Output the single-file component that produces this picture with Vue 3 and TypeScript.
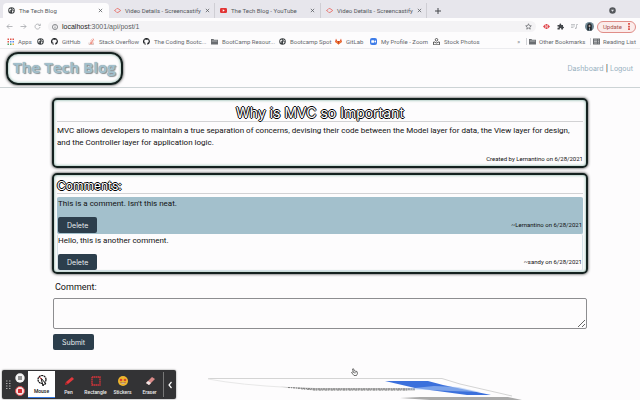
<script setup lang="ts">
import { ref } from 'vue'

interface Tab { title: string; icon: string; active?: boolean }
interface Bookmark { label: string; icon: string }
interface Comment { id: number; text: string; author: string; date: string }

const tabs: Tab[] = [
  { title: 'The Tech Blog', icon: 'globe', active: true },
  { title: 'Video Details - Screencastify', icon: 'cast' },
  { title: 'The Tech Blog - YouTube', icon: 'youtube' },
  { title: 'Video Details - Screencastify', icon: 'cast' },
]
const bookmarks: Bookmark[] = [
  { label: 'Apps', icon: 'apps' },
  { label: '', icon: 'globe' },
  { label: 'GitHub', icon: 'github' },
  { label: 'Stack Overflow', icon: 'stack' },
  { label: 'The Coding Bootc...', icon: 'github' },
  { label: 'BootCamp Resour...', icon: 'folder' },
  { label: 'Bootcamp Spot', icon: 'globe' },
  { label: 'GitLab', icon: 'gitlab' },
  { label: 'My Profile - Zoom', icon: 'zoom' },
  { label: 'Stock Photos', icon: 'stock' },
]
const comments = ref<Comment[]>([
  { id: 1, text: "This is a comment. Isn't this neat.", author: 'Lernantino', date: '6/28/2021' },
  { id: 2, text: 'Hello, this is another comment.', author: 'sandy', date: '6/28/2021' },
])
const draft = ref('')
const tools = ['Mouse', 'Pen', 'Rectangle', 'Stickers', 'Eraser']
</script>

<template>
  <svg class="sprite" aria-hidden="true">
    <symbol id="globe" viewBox="0 0 14 14">
      <circle cx="7" cy="7" r="6.5" fill="#3c4043" />
      <path d="M2 5l3-2 2 1-1 2-2 1 1 3-2-1zM8 2l4 3-1 1-2-1zM8 7l3 0 0 2-2 3-1-2z" fill="#eee" />
    </symbol>
    <symbol id="cast" viewBox="0 0 14 14">
      <path d="M5 3.500a4 4 0 0 1 5 1M10 9.500a4 4 0 0 1-5 1M4.500 4.500L1 7l3.500 2.500M10 4.500L13.500 7 10 9.500" fill="none" stroke="#e8655f" stroke-width="1.700" />
    </symbol>
    <symbol id="youtube" viewBox="0 0 14 14">
      <rect y="2" width="14" height="10" rx="2.500" fill="#e23434" /><path d="M5.500 4.500v5L9.500 7z" fill="#fff" />
    </symbol>
    <symbol id="apps" viewBox="0 0 14 14">
      <path d="M1 1h3v3H1zM6 1h3v3H6zM11 1h3v3h-3zM1 6h3v3H1z" fill="#e0564c" />
      <path d="M6 6h3v3H6zM11 6h3v3h-3z" fill="#5b8def" />
      <path d="M1 11h3v3H1zM6 11h3v3H6z" fill="#4fa66a" /><path d="M11 11h3v3h-3z" fill="#e9b440" />
    </symbol>
    <symbol id="github" viewBox="0 0 16 16">
      <path fill="#16181c" d="M8 0C3.580 0 0 3.580 0 8c0 3.540 2.290 6.530 5.470 7.590.4.070.55-.17.55-.38v-1.500c-2.230.48-2.700-1.070-2.700-1.070-.36-.92-.89-1.170-.89-1.170-.73-.5.050-.49.050-.49.8.060 1.230.83 1.230.83.71 1.220 1.870.87 2.330.66.070-.52.28-.87.5-1.070-1.770-.2-3.640-.89-3.640-3.950 0-.87.310-1.590.82-2.150-.080-.2-.36-1.020.080-2.120 0 0 .67-.21 2.200.82a7.600 7.600 0 0 1 4 0c1.530-1.040 2.200-.82 2.200-.82.44 1.100.16 1.920.080 2.120.51.560.82 1.270.82 2.150 0 3.070-1.870 3.750-3.650 3.950.29.250.54.730.54 1.480v2.200c0 .21.150.46.550.38A8 8 0 0 0 8 0z" />
    </symbol>
    <symbol id="stack" viewBox="0 0 14 14">
      <path d="M2 9v4h9V9" fill="none" stroke="#c9a9a0" stroke-width="1.300" />
      <path d="M4 11h5M4.200 8.500l5 .8M5.200 5.500l4.500 2M7 3l3.500 3.200M10 1l1.600 4" stroke="#e8604c" stroke-width="1.300" />
    </symbol>
    <symbol id="folder" viewBox="0 0 14 14">
      <path d="M0 2h5l1 1.500h8V13H0z" fill="#6a6d71" /><path d="M1.500 6h11" stroke="#fff" stroke-width="1" />
    </symbol>
    <symbol id="gitlab" viewBox="0 0 14 14">
      <path d="M7 13L0 8l2-7 2.500 5h5L12 1l2 7z" fill="#e2532d" /><path d="M7 13L4.500 6h5z" fill="#c83c22" /><path d="M7 13L1 7l3.500-1zM7 13l6-6-3.500-1z" fill="#f08a3a" />
    </symbol>
    <symbol id="zoom" viewBox="0 0 14 14">
      <rect width="14" height="14" rx="4" fill="#3f7de8" /><rect x="2.500" y="4.500" width="6" height="5" rx="1" fill="#fff" /><path d="M9 6.500l3-2v5l-3-2z" fill="#fff" />
    </symbol>
    <symbol id="stock" viewBox="0 0 14 14">
      <path d="M1 8h3l1.500 2h3L10 8h3v5.500H1z" fill="none" stroke="#222" stroke-width="1.400" /><circle cx="7" cy="3.500" r="2.500" fill="none" stroke="#222" stroke-width="1.400" />
    </symbol>
    <symbol id="list" viewBox="0 0 14 14">
      <rect x="0" y="1" width="14" height="12" fill="#6a6d71" /><path d="M2 4h6M2 7h6M2 10h6M10 4h2M10 7h2M10 10h2" stroke="#fff" />
    </symbol>
  </svg>

  <div class="window">
    <nav class="tabs" aria-label="Tabs">
      <div v-for="(tab, i) in tabs" :key="i" class="tab" :class="{ active: tab.active }">
        <svg class="ico"><use :href="'#' + tab.icon" /></svg>
        <span class="tab-title">{{ tab.title }}</span>
        <button class="plain" aria-label="Close tab">
          <svg class="cross" viewBox="0 0 6 6"><path d="M1 1l4 4M5 1L1 5" stroke="#55585c" stroke-width="0.900" /></svg>
        </button>
      </div>
      <button class="plain add" aria-label="New tab">
        <svg class="plus" viewBox="0 0 6 6"><path d="M3 0v6M0 3h6" stroke="#44474b" /></svg>
      </button>
      <svg class="ico chev" viewBox="0 0 14 14"><circle cx="7" cy="7" r="6.500" fill="#55585c" /><path d="M4 5.500h6L7 9.500z" fill="#e7e6ec" /></svg>
    </nav>

    <div class="bar">
      <button class="plain" aria-label="Back"><svg class="ico" viewBox="0 0 14 14"><path d="M13 7H2M6.500 2.500L2 7l4.500 4.500" class="line" /></svg></button>
      <button class="plain" aria-label="Forward"><svg class="ico" viewBox="0 0 14 14"><path d="M1 7h11M7.500 2.500L12 7l-4.500 4.500" class="line" /></svg></button>
      <button class="plain" aria-label="Reload"><svg class="ico" viewBox="0 0 14 14"><path d="M12 8a5 5 0 1 1-1.500-4.500L12 5M12.500 1.500V5H9" class="line" /></svg></button>
      <div class="address">
        <svg class="info" viewBox="0 0 14 14"><circle cx="7" cy="7" r="6" fill="none" stroke="#55585c" stroke-width="1.500" /><path d="M7 6v4.500M7 3.300v1.500" stroke="#55585c" stroke-width="1.500" /></svg>
        <span class="url"><b>localhost</b>:3001/api/post/1</span>
        <svg class="ico" viewBox="0 0 14 14"><path d="M7 1.500l1.600 3.700 4 .4-3 2.700.9 4L7 10.200l-3.500 2.100.9-4-3-2.700 4-.4z" fill="none" stroke="#55585c" stroke-width="1.300" /></svg>
      </div>
      <div class="exts">
        <svg class="ico" viewBox="0 0 14 14"><path d="M0 7l4-4v8zM14 7l-4-4v8zM5 2h4v10H5z" fill="#e0474c" /><path d="M7 5v4" stroke="#fff" /></svg>
        <svg class="ico" viewBox="0 0 14 14"><path d="M1 4h4V2.500a1.700 1.700 0 0 1 3.400 0V4h3.600v3.500h.5a1.500 1.500 0 0 1 0 3H12V13H8.500v-1.500a1.500 1.500 0 0 0-3 0V13H1V9.500h1.500a1.300 1.300 0 0 0 0-2.600H1z" fill="#44474b" /></svg>
        <svg class="ico" viewBox="0 0 14 14"><path d="M0 3h8M0 6h8M0 9h5M11 10V3h3" fill="none" stroke="#a9abb0" stroke-width="1.300" /><circle cx="9.500" cy="10.500" r="1.500" fill="#a9abb0" /></svg>
        <svg class="avatar" viewBox="0 0 16 16"><circle cx="8" cy="8" r="8" fill="#6f8794" /><path d="M4 15V6a4 4 0 0 1 8 0v9z" fill="#1d2227" /><path d="M6.500 5h3v4h-3z" fill="#b9a9a2" /><path d="M7 10h2v5H7z" fill="#8499a6" /></svg>
      </div>
      <button class="update">Update <svg class="dots" viewBox="0 0 2 8"><path d="M0 0h2v2H0zM0 3h2v2H0zM0 6h2v2H0z" fill="#d9483f" /></svg></button>
    </div>

    <nav class="marks" aria-label="Bookmarks">
      <a v-for="(b, i) in bookmarks" :key="i" class="mark" href="#" :aria-label="b.label || 'Saved page'"><svg class="ico"><use :href="'#' + b.icon" /></svg>{{ b.label }}</a>
      <span class="more">»</span>
      <a class="mark side" href="#"><svg class="ico"><use href="#folder" /></svg>Other Bookmarks</a>
      <a class="mark side" href="#"><svg class="ico"><use href="#list" /></svg>Reading List</a>
    </nav>

    <header class="site-head">
      <h1 class="logo">The Tech Blog</h1>
      <nav class="links"><a href="#">Dashboard</a> | <a href="#">Logout</a></nav>
    </header>

    <main class="content">
      <article class="card post">
        <h2 class="title">Why is MVC so Important</h2>
        <p class="body">MVC allows developers to maintain a true separation of concerns, devising their code between the Model layer for data, the View layer for design, and the Controller layer for application logic.</p>
        <p class="meta">Created by Lernantino on 6/28/2021</p>
      </article>

      <section class="card thread">
        <h3 class="title">Comments:</h3>
        <ul class="comments">
          <li v-for="c in comments" :key="c.id" class="comment">
            <p class="text">{{ c.text }}</p>
            <div class="foot">
              <button class="btn">Delete</button>
              <span class="meta">~{{ c.author }} on {{ c.date }}</span>
            </div>
          </li>
        </ul>
      </section>

      <form class="form" @submit.prevent>
        <label for="comment">Comment:</label>
        <textarea id="comment" v-model="draft"></textarea>
        <button class="btn" type="submit">Submit</button>
      </form>
    </main>

    <svg class="warp" viewBox="0 0 340 26" aria-hidden="true">
      <path d="M18 4.500H252L270 10 322 22" fill="none" stroke="#d4d4d4" />
      <path d="M18 5Q50 11 100 13.500" fill="none" stroke="#e8e8e8" />
      <path d="M90 12.800L125 14H225V16.500H125z" fill="#bdbdbd" />
      <path d="M98 13.500L125 15H225" fill="none" stroke="#7d7d7d" stroke-dasharray="2 1 1 1" />
      <path d="M108 14.500L125 16H218" fill="none" stroke="#8d8d8d" stroke-dasharray="1 2 2 1" />
      <path d="M195 7h43l15 4 48 10h-24l-52-7z" fill="#3b70dc" />
      <path d="M214 15l30-3 24 1 22 5-30-1z" fill="#a9c4f2" opacity="0.600" />
      <path d="M210 24l20-1h88l14 3H240z" fill="#aaa" />
    </svg>

    <svg class="pointer" viewBox="0 0 14 16" aria-hidden="true"><path d="M3 2l2-.5L7 6l5 1 1 4-2 4H6L1 9l2-1 2 1z" fill="#fff" stroke="#444" stroke-width="1.500" /><path d="M7 8v3M9.500 8v3" stroke="#444" /></svg>

    <div class="recorder" role="toolbar" aria-label="Drawing tools">
      <svg class="grip" viewBox="0 0 5 10"><path d="M0 1h1.500M3 1h1.500M0 3.500h1.500M3 3.500h1.500M0 6h1.500M3 6h1.500M0 8.500h1.500M3 8.500h1.500" stroke="#aaa" stroke-width="1.200" /></svg>
      <div class="rec">
        <button class="plain" aria-label="Pause"><svg class="round" viewBox="0 0 10 10"><circle cx="5" cy="5" r="4.700" fill="#f4f4f4" /><path d="M4 3v4M6 3v4" stroke="#333" /></svg></button>
        <button class="plain" aria-label="Stop"><svg class="round" viewBox="0 0 10 10"><circle cx="5" cy="5" r="4.500" fill="#f3dede" stroke="#d9484b" /><rect x="3" y="3" width="4" height="4" rx="0.500" fill="#d42c30" /></svg></button>
      </div>
      <button v-for="(t, i) in tools" :key="t" class="tool" :class="{ picked: i === 0 }">
        <svg v-if="i === 0" class="glyph" viewBox="0 0 12 12"><circle cx="6" cy="5.500" r="4" fill="none" stroke="#111" stroke-width="1.200" stroke-dasharray="2 .5" /><path d="M5 4l5 6-2 0-1 2z" fill="#fff" stroke="#111" /><path d="M3 3l3 2" stroke="#b33" /></svg>
        <svg v-else-if="i === 1" class="glyph" viewBox="0 0 12 12"><path d="M2 10l1-3 6-5 2 2-6 5z" fill="#e2383c" /><path d="M2 10l1-3 2 2z" fill="#a32024" /></svg>
        <svg v-else-if="i === 2" class="glyph" viewBox="0 0 12 12"><rect x="2" y="2" width="8" height="8" fill="none" stroke="#d8343a" stroke-width="1.300" stroke-dasharray="1.500 .4" /></svg>
        <svg v-else-if="i === 3" class="glyph" viewBox="0 0 12 12"><circle cx="6" cy="6" r="5" fill="#eeb62e" /><circle cx="4" cy="5" r="1.300" fill="#d8442c" /><circle cx="8" cy="5" r="1.300" fill="#d8442c" /><path d="M3.500 7.500q2.500 3 5 0z" fill="#fff" stroke="#8a4a1a" stroke-width="0.500" /></svg>
        <svg v-else class="glyph" viewBox="0 0 12 12"><path d="M2 8l6-6 3 2-6 6z" fill="#d98a88" /><path d="M2 8l2-2 3 2-2 2z" fill="#efe6e6" /></svg>
        {{ t }}
      </button>
      <button class="plain fold" aria-label="Collapse"><svg class="arrow" viewBox="0 0 4 8"><path d="M3.500 1L1 4l2.500 3" fill="none" stroke="#fff" stroke-width="1.200" /></svg></button>
    </div>
  </div>
</template>

<style>
body { background: #fdfcfd; }
</style>

<style scoped>
* { box-sizing: border-box; }
.sprite { position: absolute; width: 0; height: 0; }
.window { font-family: Roboto, "Liberation Sans", sans-serif; color: #111; min-height: 100vh; overflow: hidden; position: relative; }
button { font: inherit; cursor: pointer; }
.plain { background: none; border: 0; padding: 0; display: flex; }
a { text-decoration: none; }
svg { display: block; flex: none; }
.ico { width: 7px; height: 7px; }

.tabs { display: flex; align-items: stretch; height: 18px; padding: 3px 0 0 3px; background: #e7e6ec; }
.tab { flex: 0 1 106px; min-width: 0; display: flex; align-items: center; gap: 4px; padding: 0 5px; font-size: 6px; color: #55585c; border-right: 1px solid #cfced4; }
.tab.active { background: #fdfcfd; border-color: transparent; border-radius: 4px 4px 0 0; }
.tab-title { flex: 1; white-space: nowrap; }
.cross { width: 5px; height: 5px; }
.add { align-self: center; margin: 0 auto 0 8px; }
.plus { width: 6px; height: 6px; }
.chev { align-self: center; margin-right: 24px; }

.bar { display: flex; align-items: center; gap: 7px; height: 17px; padding: 0 4px 0 6px; }
.line { fill: none; stroke: #9a9ca1; stroke-width: 1.4; }
.address { flex: 1; display: flex; align-items: center; height: 11px; padding: 0 4px; gap: 4px; border-radius: 6px; background: #f4f3f5; font-family: "Liberation Sans", sans-serif; font-size: 7px; color: #5b5e63; }
.address b { color: #222; font-weight: 500; }
.info { width: 6px; height: 6px; }
.url { flex: 1; }
.exts { display: flex; align-items: center; gap: 7px; margin-right: -4px; }
.avatar { width: 9px; height: 9px; }
.update { display: flex; align-items: center; gap: 6px; height: 12px; padding: 0 5px; border: 1px solid #e08d88; border-radius: 6px; background: #fbeceb; color: #a8524e; font-size: 6px; }
.dots { width: 2px; height: 7px; }

.marks { display: grid; grid-template-columns: 30px 14px 37px 55px 68px 68px 56px 35px 63px 1fr auto 64px 46px; align-items: center; height: 14px; padding: 0 4px 0 7px; border-bottom: 1px solid #ececef; font-size: 6px; color: #66696e; }
.mark { display: flex; align-items: center; gap: 4px; color: inherit; white-space: nowrap; }
.more { margin-right: 6px; }
.side { gap: 3px; border-left: 1px solid #d0d1d5; padding-left: 2px; }

.site-head { display: flex; align-items: center; justify-content: space-between; height: 39px; padding: 0 7px 0 6px; border-bottom: 1px solid #ccd3d5; }
.logo { margin: 0; padding: 0 5px; border: 2px solid #14211f; border-radius: 12px; height: 33px; line-height: 26px; font-family: "Open Sans", sans-serif; font-size: 15px; font-weight: 700; color: #a3c0cc; text-shadow: 0 0 1px #7f929b, 1px 1px 1px #8a8f92; box-shadow: 0 0 3px #222, inset 0 0 3px #6fa595; }
.links { font-family: Inter, sans-serif; font-size: 7px; color: #111; }
.links a { color: #97b0bd; }

.content { padding: 10px 52px; }
.card { margin-bottom: 5px; padding: 4px 3px 3px; border: 2px solid #14211f; border-radius: 5px; box-shadow: 0 0 3px #222, inset 0 0 3px #6fa595; }
.title { margin: 0; border-bottom: 1px solid #d2d2d4; font-family: Inter, sans-serif; font-weight: 400; color: #fff; text-shadow: 1px 0 #000, -1px 0 #000, 0 1px #000, 0 -1px #000; }
.post .title { height: 18px; line-height: 17px; font-size: 14px; text-align: center; }
.thread .title { height: 15px; line-height: 13px; font-size: 12px; }
.thread { padding-bottom: 1px; }
.body { margin: 3px 0 6px; font-size: 8px; line-height: 12px; }
.meta { margin: 0; font-size: 6px; line-height: 8px; text-align: right; }
.comments { list-style: none; margin: 3px 0 0; padding: 0; }
.comment { border: 1px solid #d5e2e7; border-top: 0; border-radius: 2px; }
.comment:nth-child(odd) { background: #a3c0cc; border-color: #a3c0cc; }
.text { margin: 0; font-size: 8px; line-height: 13px; padding-bottom: 7px; }
.foot { display: flex; align-items: center; justify-content: space-between; }
.btn { height: 16px; padding: 0 9px; border: 0; border-radius: 2px; background: #2c3e4c; color: #e6ecef; font-family: Inter, sans-serif; font-size: 7px; }
.form { display: flex; flex-direction: column; align-items: flex-start; padding: 0 1px; }
.form label { padding-left: 2px; font-size: 9px; line-height: 16px; }
.form textarea { width: 100%; height: 31px; margin: 3px 0 5px; border: 1px solid #8d8d90; border-radius: 2px; background: transparent; font: inherit; font-size: 8px; }

.recorder { position: absolute; left: 2px; bottom: 1px; display: flex; align-items: center; height: 29px; padding-left: 4px; border-radius: 2px; background: #333335; box-shadow: 0 0 2px #777; }
.grip { width: 5px; height: 10px; margin-right: 4px; }
.rec { display: flex; flex-direction: column; gap: 3px; margin-right: 3px; }
.round { width: 10px; height: 10px; }
.tool { display: flex; flex-direction: column; align-items: center; justify-content: center; gap: 2px; width: 27px; height: 27px; padding: 0; border: 0; background: none; color: #eee; font-size: 5px; font-weight: 500; line-height: 6px; }
.picked { background: #fff; color: #111; border-bottom: 1px solid #3478e0; }
.glyph { width: 12px; height: 12px; }
.fold { align-items: center; justify-content: center; width: 13px; height: 25px; border-left: 1px solid #777; }
.arrow { width: 4px; height: 8px; }
.warp { position: absolute; left: 190px; bottom: 0; width: 340px; height: 26px; }
.pointer { position: absolute; left: 351px; bottom: 24px; width: 7px; height: 8px; }
</style>
